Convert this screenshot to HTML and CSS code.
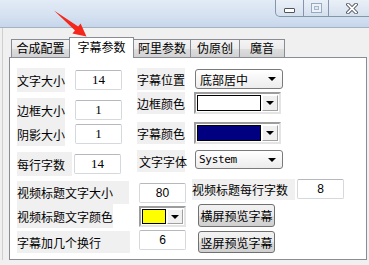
FILE: index.html
```html
<!DOCTYPE html>
<html lang="zh-CN">
<head>
    <meta charset="UTF-8">
    <title>字幕参数</title>
    <link rel="stylesheet" href="styles.css">
</head>
<body>
    <div class="titlebar">
        <div class="caption">
            <span class="cap cap-min"><i></i></span>
            <span class="cap cap-max"><i></i></span>
            <span class="cap cap-close">
                <svg width="12" height="11" viewBox="0 0 12 11">
                    <path d="M2 1.5 L10 9.5 M10 1.5 L2 9.5" stroke="#4a4f57" stroke-width="3.6" stroke-linecap="square"/>
                    <path d="M2 1.5 L10 9.5 M10 1.5 L2 9.5" stroke="#ffffff" stroke-width="1.8" stroke-linecap="square"/>
                </svg>
            </span>
        </div>
    </div>

    <div class="client">
        <div class="tabs">
            <div class="tab t1">合成配置</div>
            <div class="tab t2 active">字幕参数</div>
            <div class="tab t3">阿里参数</div>
            <div class="tab t4">伪原创</div>
            <div class="tab t5">魔音</div>
        </div>

        <div class="panel">
            <div class="top">
                <div class="col-left">
                    <div class="row">
                        <span class="lbl w48">文字大小</span>
                        <input class="num serif" value="14">
                    </div>
                    <div class="row gap6">
                        <span class="lbl w48">边框大小</span>
                        <input class="num serif" value="1">
                    </div>
                    <div class="row">
                        <span class="lbl w48">阴影大小</span>
                        <input class="num serif" value="1">
                    </div>
                    <div class="row gap6">
                        <span class="lbl w55">每行字数</span>
                        <input class="num serif tight" value="14">
                    </div>
                </div>

                <div class="col-right">
                    <div class="row r22">
                        <span class="lbl w48">字幕位置</span>
                        <div class="combo">
                            <span>底部居中</span>
                            <b class="arrow"></b>
                        </div>
                    </div>
                    <div class="row r22 gap2">
                        <span class="lbl w48">边框颜色</span>
                        <div class="color wide">
                            <span class="swatch white"></span>
                            <span class="drop"><b class="arrow"></b></span>
                        </div>
                    </div>
                    <div class="row r22 gap8">
                        <span class="lbl w48">字幕颜色</span>
                        <div class="color wide">
                            <span class="swatch navy"></span>
                            <span class="drop"><b class="arrow"></b></span>
                        </div>
                    </div>
                    <div class="row r22 gap6">
                        <span class="lbl w48 pad2">文字字体</span>
                        <div class="combo font">
                            <span class="sys">System</span>
                            <b class="arrow"></b>
                        </div>
                    </div>
                </div>
            </div>

            <div class="bottom">
                <span class="lbl b1">视频标题文字大小</span>
                <input class="num sans b-in" value="80">
                <div class="pair">
                    <span class="lbl b2">视频标题每行字数</span>
                    <input class="num sans" value="8">
                </div>

                <span class="lbl b3">视频标题文字颜色</span>
                <div class="color small">
                    <span class="swatch yellow"></span>
                    <span class="drop"><b class="arrow"></b></span>
                </div>
                <button class="btn">横屏预览字幕</button>

                <span class="lbl b4">字幕加几个换行</span>
                <input class="num sans" value="6">
                <button class="btn">竖屏预览字幕</button>
            </div>
        </div>
    </div>

    <svg class="pointer" width="100" height="45" viewBox="0 0 100 45">
        <polygon points="54,10.5 78.2,26.4 80.6,23.4 86.5,36.5 72.4,33.4 75,30.4" fill="#f5261a"/>
    </svg>
</body>
</html>
```

FILE: styles.css
```css
/* Page */
body {
    margin: 0;
    width: 369px;
    height: 265px;
    overflow: hidden;
    position: relative;
    background: #f0f0f0;
    font-family: "Noto Sans CJK SC", "Liberation Sans", sans-serif;
    font-size: 12px;
    color: #000;
}

/* Title bar */
.titlebar {
    height: 27px;
    border-bottom: 1px solid #a7b1bf;
    background: linear-gradient(to bottom, #e2ebf6 0%, #d6e2f1 55%, #c6d6eb 100%);
    display: flex;
    justify-content: flex-end;
    overflow: hidden;
}

.caption {
    display: flex;
    height: 17px;
    margin-right: -2px;
}

.cap {
    box-sizing: border-box;
    height: 17px;
    border: 1px solid #8595ab;
    border-top: none;
    margin-left: -1px;
    background: linear-gradient(to bottom, #eaf0f7, #d5e0ee);
    display: flex;
    justify-content: center;
    align-items: center;
}

.cap-min {
    width: 29px;
    border-bottom-left-radius: 5px;
    align-items: flex-end;
    padding-bottom: 3px;
}

.cap-min i {
    display: block;
    width: 9px;
    height: 3px;
    background: #fff;
    border: 1px solid #50555d;
    border-radius: 1px;
}

.cap-max {
    width: 26px;
}

.cap-max i {
    display: block;
    box-sizing: border-box;
    width: 11px;
    height: 10px;
    border: 1px solid #98aac1;
    background: #dfe7f1;
    box-shadow: inset 0 0 0 2px #edf2f8, inset 0 0 0 3px #a6b6cb;
}

.cap-close {
    width: 43px;
    padding-left: 4px;
}

/* Client area */
.client {
    padding: 0 2px 0 9px;
    background: linear-gradient(#cfcfcf, #cfcfcf) 2px 0 / 1px 100% no-repeat, #f0f0f0;
}

/* Tabs */
.tabs {
    display: flex;
    align-items: flex-end;
    height: 20px;
    padding-top: 9px;
    padding-left: 2px;
}

.tab {
    box-sizing: border-box;
    height: 18px;
    margin-left: -1px;
    border: 1px solid #898c95;
    border-bottom: none;
    background: linear-gradient(to bottom, #f4f4f4 0%, #ececec 50%, #dedede 51%, #d2d2d2 100%);
    text-align: center;
    line-height: 16px;
}

.tab.t1 { width: 59px; margin-left: 0; }
.tab.t2 { width: 65px; }
.tab.t3 { width: 58px; }
.tab.t4 { width: 50px; }
.tab.t5 { width: 46px; }

.tab.active {
    height: 21px;
    margin-bottom: -1px;
    background: #fff;
    position: relative;
    z-index: 1;
    line-height: 18px;
}

/* Panel */
.panel {
    box-sizing: border-box;
    height: 203px;
    border: 1px solid #898c95;
    background: #fff;
}

.top {
    display: flex;
}

.col-left {
    width: 120px;
    padding: 10px 0 0 7px;
}

.col-right {
    padding-top: 10px;
}

.row {
    display: flex;
    align-items: center;
    height: 24px;
}

.row.r22 { height: 22px; }
.row.gap2 { margin-top: 2px; }
.row.gap6 { margin-top: 6px; }
.row.gap8 { margin-top: 8px; }

/* Labels */
.lbl {
    display: flex;
    align-items: center;
    box-sizing: border-box;
    height: 100%;
    background: #f0f0f0;
    white-space: nowrap;
}

.lbl.w48 { width: 48px; }
.lbl.w55 { width: 55px; }
.lbl.pad2 { padding-left: 2px; }

/* Text boxes */
.num {
    box-sizing: border-box;
    width: 47px;
    height: 20px;
    margin: 0 0 0 10px;
    padding: 0;
    border: 1px solid #d5d8dd;
    border-top-color: #b5b8be;
    border-radius: 2px;
    background: #fff;
    text-align: center;
    color: #000;
    outline: none;
}

.num.tight { margin-left: 2px; }

.serif {
    font-family: "Liberation Serif", serif;
    font-size: 13px;
}

.sans {
    font-family: "Liberation Sans", sans-serif;
    font-size: 12px;
}

/* Drop-down lists */
.arrow {
    display: block;
    width: 0;
    height: 0;
    border-left: 4px solid transparent;
    border-right: 4px solid transparent;
    border-top: 4px solid #000;
}

.combo {
    box-sizing: border-box;
    width: 88px;
    height: 20px;
    margin-left: 10px;
    padding: 0 6px 0 4px;
    border: 1px solid #7a7a7a;
    border-radius: 3px;
    background: linear-gradient(to bottom, #ffffff, #ececec);
    display: flex;
    align-items: center;
    justify-content: space-between;
}

.combo.font {
    height: 19px;
    margin-top: -3px;
    padding-left: 3px;
}

.sys {
    font-family: "DejaVu Sans Mono", monospace;
    font-size: 11px;
    letter-spacing: -0.3px;
}

/* Colour pickers */
.color {
    box-sizing: border-box;
    height: 22px;
    margin-left: 9px;
    padding: 1px;
    border: 2px solid;
    border-color: #9d9d9d #e4e4e4 #e4e4e4 #9d9d9d;
    background: #fff;
    display: flex;
    gap: 1px;
}

.color.wide { width: 87px; }

.color.small {
    width: 47px;
    height: 21px;
    margin: 2px 0 0;
}

.swatch {
    flex: 1;
    border: 1px solid #000;
}

.swatch.white { background: #fff; }
.swatch.navy { background: #000080; }
.swatch.yellow { background: #ffff00; }

.drop {
    width: 16px;
    background: #f0f0f0;
    border: 1px solid;
    border-color: #fff #a0a0a0 #a0a0a0 #fff;
    display: flex;
    align-items: center;
    justify-content: center;
    box-sizing: border-box;
}

/* Bottom block */
.bottom {
    display: grid;
    grid-template-columns: 122px 53px auto;
    grid-template-rows: 24px 24px 23px;
    margin: 4px 0 0 7px;
}

.bottom > .num { margin-left: 0; align-self: center; }
.bottom .b-in { margin-top: 1px; }
.bottom > .lbl { height: auto; }

.lbl.b1 { width: 112px; margin-top: 1px; }
.lbl.b3 { width: 96px; }
.lbl.b4 { width: 113px; margin: 3px 0 0; height: 22px; align-self: start; }

.pair {
    display: flex;
    align-items: flex-start;
    margin-top: -1px;
}

.lbl.b2 {
    width: 103px;
    height: 21px;
}

.pair .num {
    margin-left: 2px;
}

.btn {
    box-sizing: border-box;
    width: 77px;
    height: 23px;
    margin-left: 6px;
    padding: 0;
    border: 1px solid #707070;
    border-radius: 3px;
    background: linear-gradient(to bottom, #f2f2f2 0%, #ebebeb 50%, #dddddd 51%, #cfcfcf 100%);
    font-family: "Noto Sans CJK SC", sans-serif;
    font-size: 12px;
    color: #000;
    align-self: start;
}

.bottom .btn:last-child {
    height: 22px;
    margin-top: 3px;
}

/* Red pointer drawn over the window */
.pointer {
    position: absolute;
    left: 0;
    top: 0;
    z-index: 5;
    pointer-events: none;
}
```
